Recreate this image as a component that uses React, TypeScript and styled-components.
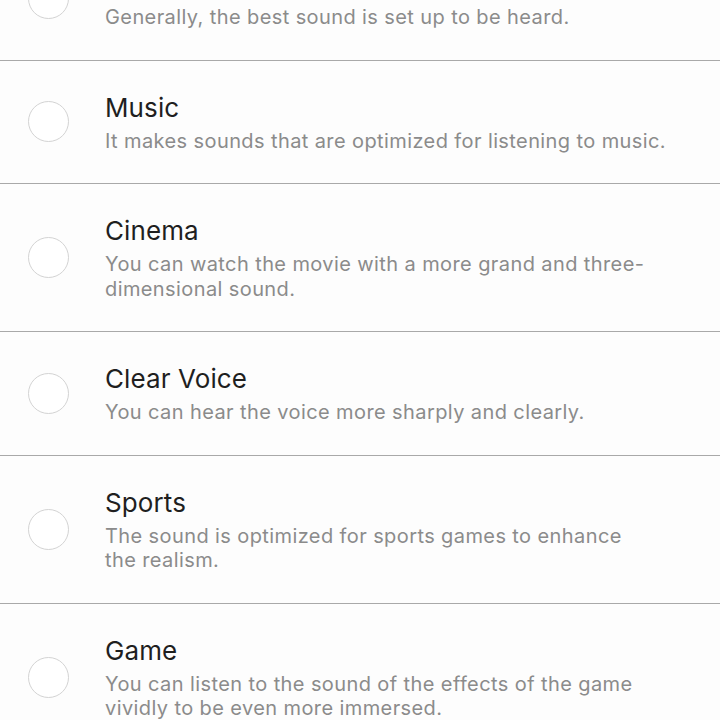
import React from "react";
import styled, { createGlobalStyle } from "styled-components";

const Global = createGlobalStyle`
  html, body { margin: 0; padding: 0; background: #fdfdfd; }
  body { font-family: Inter, "Noto Sans", sans-serif; -webkit-font-smoothing: antialiased; overflow: hidden; }
`;

const List = styled.ul`
  list-style: none;
  margin: -63px 0 0 0;
  padding: 0;
  width: 720px;
`;

const Row = styled.li`
  display: flex;
  align-items: center;
  gap: 36px;
  padding: 30px 34px 30px 28px;
  border-bottom: 1px solid #a9a9a9;
  background: #fdfdfd;
`;

const Radio = styled.span`
  flex: none;
  width: 41px;
  height: 41px;
  box-sizing: border-box;
  border-radius: 50%;
  border: 1.5px solid #d3d3d3;
  background: #fff;
`;

const Texts = styled.div`
  display: flex;
  flex-direction: column;
  gap: 4px;
  min-width: 0;
  flex: 1;
`;

const Title = styled.div`
  font-size: 26px;
  line-height: 34px;
  color: #1f1f1f;
  letter-spacing: 0.1px;
`;

const Desc = styled.div`
  font-size: 20px;
  line-height: 24.5px;
  color: #8b8b8b;
  letter-spacing: 0.4px;
  text-wrap: pretty;
`;

const modes = [
  { title: "Standard", desc: "Generally, the best sound is set up to be heard." },
  { title: "Music", desc: "It makes sounds that are optimized for listening to music." },
  { title: "Cinema", desc: "You can watch the movie with a more grand and three-dimensional sound." },
  { title: "Clear Voice", desc: "You can hear the voice more sharply and clearly." },
  { title: "Sports", desc: "The sound is optimized for sports games to enhance the realism." },
  { title: "Game", desc: "You can listen to the sound of the effects of the game vividly to be even more immersed." },
];

export default function App() {
  return (
    <>
      <Global />
      <List>
        {modes.map((m) => (
          <Row key={m.title}>
            <Radio />
            <Texts>
              <Title>{m.title}</Title>
              <Desc>{m.desc}</Desc>
            </Texts>
          </Row>
        ))}
      </List>
    </>
  );
}
